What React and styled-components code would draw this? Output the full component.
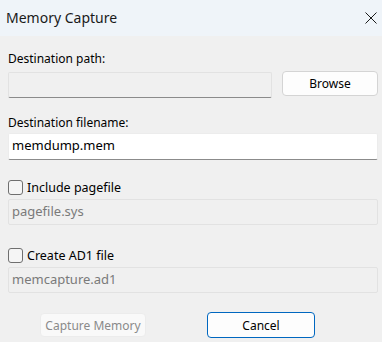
import React from "react";
import styled, { createGlobalStyle } from "styled-components";

const Global = createGlobalStyle`
  html, body { margin: 0; padding: 0; background: #f0f0f0; }
  * { box-sizing: border-box; }
`;

const FONT = `"Noto Sans", "Open Sans", sans-serif`;

const Window = styled.div`
  width: 382px;
  height: 342px;
  background: #f0f0f0;
  font-family: ${FONT};
  color: #000;
  display: flex;
  flex-direction: column;
  overflow: hidden;
`;

const TitleBar = styled.div`
  height: 36px;
  background: #eff4f9;
  display: flex;
  align-items: center;
  justify-content: space-between;
  padding: 0 5px 0 6px;
`;

const Title = styled.div`
  font-size: 14px;
  line-height: 20px;
  color: #1a1a1a;
`;

const CloseButton = styled.button`
  border: none;
  background: transparent;
  padding: 0;
  width: 12px;
  height: 12px;
  display: flex;
`;

const Content = styled.div`
  display: flex;
  flex-direction: column;
  padding: 0 4px 0 8px;
`;

const Label = styled.div`
  font-size: 12px;
  line-height: 16px;
  margin-top: ${(p) => p.$top}px;
`;

const Row = styled.div`
  display: flex;
  align-items: flex-start;
  margin-top: ${(p) => p.$top}px;
`;

const Input = styled.div`
  height: ${(p) => p.$h || 26}px;
  margin-top: ${(p) => p.$top || 0}px;
  width: ${(p) => (p.$w ? `${p.$w}px` : "100%")};
  background: ${(p) => (p.$white ? "#ffffff" : "#f0f0f0")};
  border: 1px solid ${(p) => (p.$white ? "#ececec" : "#e2e2e2")};
  border-bottom: 1px solid ${(p) => (p.$underline ? "#8b8b8b" : "#e2e2e2")};
  border-radius: 2px;
  padding: 2px 3px 0;
  font-size: 13px;
  line-height: 19px;
  color: ${(p) => (p.$muted ? "#7a7a7a" : "#000")};
`;

const Button = styled.button`
  font-family: ${FONT};
  font-size: 12px;
  height: ${(p) => p.$h}px;
  width: ${(p) => p.$w}px;
  margin-left: ${(p) => p.$left || 0}px;
  background: ${(p) => (p.$disabled ? "#f9f9f9" : "#fdfdfd")};
  color: ${(p) => (p.$disabled ? "#8a8a8a" : "#000")};
  border: 1px solid
    ${(p) => (p.$primary ? "#0067c0" : p.$disabled ? "#ececec" : "#d4d4d4")};
  border-radius: 4px;
  padding: 0;
  display: flex;
  align-items: center;
  justify-content: center;
`;

const CheckRow = styled.label`
  display: flex;
  align-items: center;
  height: 18px;
  margin-top: ${(p) => p.$top}px;
  font-size: 12.5px;
  gap: 4px;
`;

const Box = styled.span`
  width: 15px;
  height: 15px;
  border: 1px solid #6f6f6f;
  border-radius: 3px;
  background: #f5f5f5;
`;

const ButtonRow = styled.div`
  display: flex;
  align-items: center;
  margin-top: 19px;
  padding-left: 32px;
`;

export default function App() {
  return (
    <Window>
      <Global />
      <TitleBar>
        <Title>Memory Capture</Title>
        <CloseButton aria-label="Close">
          <svg width="12" height="12" viewBox="0 0 12 12">
            <path d="M0.5 0.5 L11.5 11.5 M11.5 0.5 L0.5 11.5" stroke="#1a1a1a" strokeWidth="1" />
          </svg>
        </CloseButton>
      </TitleBar>
      <Content>
        <Label $top={15}>Destination path:</Label>
        <Row $top={4}>
          <Input $w={264} $top={1} $underline />
          <Button $w={96} $h={25} $left={10}>Browse</Button>
        </Row>
        <Label $top={17}>Destination filename:</Label>
        <Input $top={2} $h={27} $white $underline>memdump.mem</Input>
        <CheckRow $top={18}>
          <Box />
          Include pagefile
        </CheckRow>
        <Input $top={3} $muted>pagefile.sys</Input>
        <CheckRow $top={21}>
          <Box />
          Create AD1 file
        </CheckRow>
        <Input $top={3} $muted>memcapture.ad1</Input>
        <ButtonRow>
          <Button $w={106} $h={24} $disabled>Capture Memory</Button>
          <Button $w={108} $h={26} $left={61} $primary>Cancel</Button>
        </ButtonRow>
      </Content>
    </Window>
  );
}
